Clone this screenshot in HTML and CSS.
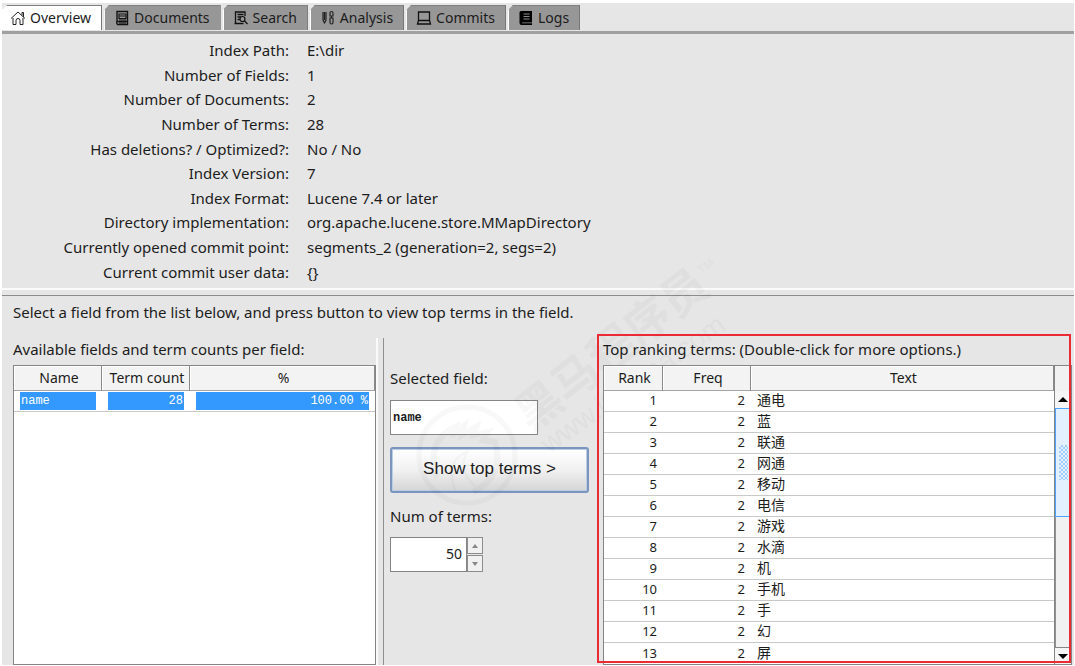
FILE: index.html
```html
<!DOCTYPE html>
<html lang="en">
<head>
<meta charset="utf-8">
<title>Luke: Lucene Toolbox</title>
<link rel="stylesheet" href="styles.css">
</head>
<body>
<div class="app">
  <nav class="tabs" role="tablist">
    <button class="tab tab-active" role="tab" aria-selected="true">
      <svg class="icon" viewBox="0 0 16 16" aria-hidden="true"><path d="M1 8.500 8 2l7 6.500M12 5.500V2.500h1.500V7M3 8v6.500h3V10.500q0-2 2-2t2 2v4h3V8" fill="none" stroke="#222"/></svg>
      Overview</button>
    <button class="tab" role="tab">
      <svg class="icon" viewBox="0 0 16 16" aria-hidden="true"><path d="M3 1.500h10.500v10H3zM3 11.500q-1 1.500.5 3h10v-3" fill="none" stroke="#111" stroke-width="1.400"/><path d="M5 4h7v4.500H5zM5 10h7M5 13h7" fill="none" stroke="#111" stroke-width="1.200"/><path d="M5.500 6h6" stroke="#111"/></svg>
      Documents</button>
    <button class="tab" role="tab">
      <svg class="icon" viewBox="0 0 16 16" aria-hidden="true"><path d="M12 6V2H2.500v11M4.500 4.500h6M4.500 7h3.500M4.500 9.500h2.500" fill="none" stroke="#111" stroke-width="1.300"/><circle cx="9.500" cy="9" r="2.500" fill="none" stroke="#111" stroke-width="1.200"/><path d="m11.500 11 3 3M1.500 13.500h9" stroke="#111" stroke-width="1.300"/></svg>
      Search</button>
    <button class="tab" role="tab">
      <svg class="icon" viewBox="0 0 16 16" aria-hidden="true"><path d="M3 2v8l1.500 3L6 10V2M4.500 2v8M10 5.500V3q0-1.500 1.500-1.500T13 3v2.500M9.500 6h4M10 8v4.500q0 1.500 1.500 1.500t1.500-1.500V8zM11.500 8V6" fill="none" stroke="#222" stroke-width="1.200"/></svg>
      Analysis</button>
    <button class="tab" role="tab">
      <svg class="icon" viewBox="0 0 16 16" aria-hidden="true"><path d="M2.500 2h11v8.500h-11zM2.500 10.500l-1 3.500h13l-1-3.500M1.500 14h13" fill="none" stroke="#111" stroke-width="1.300"/></svg>
      Commits</button>
    <button class="tab" role="tab">
      <svg class="icon" viewBox="0 0 16 16" aria-hidden="true"><path d="M3 1h11v11.500H4v.8h10V15H3.500Q1.500 15 1.500 13V2.500Q1.500 1 3 1z" fill="#000"/><path d="M5.500 4h6M5.500 6.500h6M5.500 9h6" stroke="#8a8a8a"/></svg>
      Logs</button>
  </nav>

  <dl class="info">
    <dt>Index Path:</dt><dd>E:\dir</dd>
    <dt>Number of Fields:</dt><dd>1</dd>
    <dt>Number of Documents:</dt><dd>2</dd>
    <dt>Number of Terms:</dt><dd>28</dd>
    <dt>Has deletions? / Optimized?:</dt><dd>No / No</dd>
    <dt>Index Version:</dt><dd>7</dd>
    <dt>Index Format:</dt><dd>Lucene 7.4 or later</dd>
    <dt>Directory implementation:</dt><dd>org.apache.lucene.store.MMapDirectory</dd>
    <dt>Currently opened commit point:</dt><dd>segments_2 (generation=2, segs=2)</dd>
    <dt>Current commit user data:</dt><dd>{}</dd>
  </dl>

  <div class="split-h"></div>

  <main class="lower">
    <p class="hint">Select a field from the list below, and press button to view top terms in the field.</p>
    <div class="panes">
      <section class="fields">
        <h2 class="caption" id="fields-caption">Available fields and term counts per field:</h2>
        <div class="box">
          <table class="grid grid-fields" aria-labelledby="fields-caption">
            <colgroup><col class="col-name"><col class="col-count"><col></colgroup>
            <thead><tr><th>Name</th><th>Term count</th><th>%</th></tr></thead>
            <tbody><tr><td><span class="sel">name</span></td><td><span class="sel sel-num">28</span></td><td><span class="sel sel-num">100.00 %</span></td></tr></tbody>
          </table>
        </div>
      </section>

      <div class="split-v"></div>

      <section class="controls">
        <label for="field">Selected field:</label>
        <input class="text" id="field" type="text" value="name">
        <button class="show">Show top terms &gt;</button>
        <label for="num">Num of terms:</label>
        <div class="spinner">
          <input id="num" type="text" inputmode="numeric" value="50">
          <div class="steps">
            <button aria-label="Increase"><svg viewBox="0 0 6 4"><path d="M0 4 3 0l3 4z"/></svg></button>
            <button aria-label="Decrease"><svg viewBox="0 0 6 4"><path d="M0 0h6L3 4z"/></svg></button>
          </div>
        </div>
      </section>

      <section class="terms">
        <h2 class="caption" id="terms-caption">Top ranking terms: (Double-click for more options.)</h2>
        <div class="box box-terms">
          <table class="grid grid-terms" aria-labelledby="terms-caption">
            <colgroup><col class="col-rank"><col class="col-freq"><col></colgroup>
            <thead><tr><th>Rank</th><th>Freq</th><th>Text</th></tr></thead>
            <tbody lang="zh">
              <tr><td>1</td><td>2</td><td>通电</td></tr>
              <tr><td>2</td><td>2</td><td>蓝</td></tr>
              <tr><td>3</td><td>2</td><td>联通</td></tr>
              <tr><td>4</td><td>2</td><td>网通</td></tr>
              <tr><td>5</td><td>2</td><td>移动</td></tr>
              <tr><td>6</td><td>2</td><td>电信</td></tr>
              <tr><td>7</td><td>2</td><td>游戏</td></tr>
              <tr><td>8</td><td>2</td><td>水滴</td></tr>
              <tr><td>9</td><td>2</td><td>机</td></tr>
              <tr><td>10</td><td>2</td><td>手机</td></tr>
              <tr><td>11</td><td>2</td><td>手</td></tr>
              <tr><td>12</td><td>2</td><td>幻</td></tr>
              <tr><td>13</td><td>2</td><td>屏</td></tr>
            </tbody>
          </table>
          <div class="scroll">
            <div class="scroll-corner"></div>
            <button class="arrow" aria-label="Scroll up"><svg viewBox="0 0 10 5"><path d="M0 5 5 0l5 5z"/></svg></button>
            <div class="thumb"><div class="grip"></div></div>
            <div class="track"></div>
            <button class="arrow arrow-down" aria-label="Scroll down"><svg viewBox="0 0 10 5"><path d="M0 0h10L5 5z"/></svg></button>
          </div>
        </div>
        <div class="frame"></div>
      </section>
    </div>
  </main>

  <svg class="watermark" viewBox="0 0 340 270" aria-hidden="true">
    <g fill="none" stroke="#000">
      <circle cx="67" cy="210" r="48" stroke-width="5"/>
      <path d="M37 232q-12-36 18-50l-4 9 13-10-2 9 14-8-3 8 15-3-5 8 12 2q10 34-22 50" stroke-width="6"/>
      <path d="M55 245q-10-30 12-38-10 18 8 34" stroke-width="2"/>
    </g>
    <g transform="translate(131 188) rotate(-38)">
      <text class="wm-name" x="0" y="0">黑马程序员</text>
      <text class="wm-tm" x="232" y="-20">TM</text>
    </g>
    <text class="wm-url" transform="translate(149 209) rotate(-35)">www.itheima.com</text>
  </svg>
</div>
</body>
</html>
```
FILE: styles.css
```css
* { box-sizing: border-box; }

body {
  margin: 0;
  background: #fff;
  color: #1c1c1c;
  font: 15px/18px "Noto Sans", "Noto Sans CJK SC", sans-serif;
}

button, input { font: inherit; color: inherit; }

.app {
  position: relative;
  display: flex;
  flex-direction: column;
  min-height: 100vh;
  padding: 3px 1px 1px 2px;
}

/* Tabs */
.tabs {
  display: flex;
  gap: 2px;
  padding-top: 2px;
  background: #e6e6e6;
  border-bottom: 3px solid #a0a0a0;
  height: 31px;
}

.tab {
  display: flex;
  align-items: center;
  gap: 4px;
  height: 25px;
  padding: 0 10px 0 9px;
  border: 0;
  border-top: 1px solid #808080;
  border-right: 1px solid #777;
  border-left: 1px solid #fff;
  background: #979797;
  font-size: 14px;
  white-space: nowrap;
  clip-path: polygon(5px 0, 100% 0, 100% 100%, 0 100%, 0 5px);
}

.tab-active { background: #fff; padding-left: 7px; }

.icon { width: 16px; height: 16px; flex: none; }

/* Index information */
.info {
  display: grid;
  grid-template-columns: 287px 1fr;
  grid-auto-rows: 1fr;
  column-gap: 18px;
  align-items: center;
  min-height: 254px;
  margin: 0;
  padding: 4px 0;
  background: #e6e6e6;
}

.info dt { text-align: right; }
.info dd { margin: 0; }

.split-h {
  height: 8px;
  background: #e6e6e6;
  border-top: 2px solid #fafafa;
  border-bottom: 1px solid #8c8c8c;
}

/* Lower pane */
.lower {
  display: flex;
  flex-direction: column;
  flex: 1;
  background: #e6e6e6;
}

.hint { margin: 7px 11px 17px; }

.panes { display: flex; flex: 1; }

.caption {
  margin: 0;
  padding: 2px 0 7px;
  font-size: 15px;
  font-weight: 400;
}

.fields {
  display: flex;
  flex-direction: column;
  width: 374px;
  padding-left: 11px;
}

.box {
  flex: 1;
  background: #fff;
  border: 1px solid #858585;
}

.grid {
  width: 100%;
  table-layout: fixed;
  border-collapse: separate;
  border-spacing: 0;
}

.grid th {
  height: 25px;
  padding: 0 0 0 3px;
  background: #f3f3f3;
  border-right: 1px solid #8a8a8a;
  border-bottom: 1px solid #a5a5a5;
  box-shadow: inset 1px 1px #fff;
  font-size: 14px;
  font-weight: 400;
}

.grid td { height: 21px; border-bottom: 1px solid #c9c9c9; }

.col-name { width: 88px; }
.col-count { width: 88px; }

.grid-fields td { padding: 0 6px; }

.sel {
  display: block;
  padding: 0 1px;
  background: #3399ff;
  color: #fff;
  font: 12px/18px "Liberation Mono", monospace;
}

.sel-num { text-align: right; }

.split-v {
  width: 8px;
  border-left: 2px solid #fafafa;
  border-right: 1px solid #909090;
}

/* Controls */
.controls {
  display: flex;
  flex-direction: column;
  align-items: flex-start;
  width: 219px;
  padding: 31px 12px 0 6px;
}

.text {
  width: 148px;
  height: 35px;
  margin: 13px 0 12px;
  padding: 0 2px;
  border: 1px solid #858585;
  background: #fff;
  font: bold 12px/18px "Liberation Mono", monospace;
}

.show {
  width: 199px;
  height: 46px;
  margin-bottom: 14px;
  padding: 0 6px 2px;
  border: 2px solid #7b95bd;
  border-radius: 3px;
  background: linear-gradient(#fff, #f1f1f1 50%, #d5d5d5);
  box-shadow: inset 0 0 0 1px #b9cce8;
  font: 17px/20px "Liberation Sans", Arial, sans-serif;
}

.spinner { display: flex; margin-top: 12px; }

.spinner input {
  width: 77px;
  height: 35px;
  padding: 0 4px 2px;
  border: 1px solid #858585;
  background: #fff;
  font-size: 14px;
  text-align: right;
}

.steps { display: flex; flex-direction: column; gap: 1px; }

.steps button {
  display: flex;
  align-items: center;
  justify-content: center;
  width: 16px;
  height: 17px;
  padding: 0;
  border: 1px solid #8c8c8c;
  background: #f1f1f1;
}

.steps svg { width: 6px; height: 4px; fill: #888; }

/* Ranking */
.terms {
  position: relative;
  display: flex;
  flex: 1;
  flex-direction: column;
  padding-right: 2px;
}

.box-terms {
  position: relative;
  z-index: 2;
  display: flex;
}

.grid-terms { flex: 1; width: auto; align-self: flex-start; }
.grid-terms td { padding: 0 6px 2px 0; font-size: 13px; line-height: 18px; text-align: right; }
.grid-terms td:nth-child(3) { padding-left: 6px; font-size: 14px; text-align: left; }
.grid-terms tr:last-child td { border-bottom: 0; }

.col-rank { width: 59px; }
.col-freq { width: 88px; }

.scroll {
  display: flex;
  flex-direction: column;
  width: 17px;
  border-left: 1px solid #858585;
  background: #f1f1f1;
}

.scroll-corner { height: 25px; }

.arrow {
  display: flex;
  align-items: center;
  justify-content: center;
  height: 17px;
  padding: 0;
  border: 0;
  background: #f5f5f5;
}

.arrow svg { width: 10px; height: 5px; }
.arrow-down { border-top: 1px solid #858585; }

.thumb {
  display: flex;
  align-items: center;
  justify-content: center;
  height: 109px;
  border: 1px solid #4da3ff;
  background: #e2f0ff;
}

.grip {
  width: 9px;
  height: 35px;
  background: repeating-conic-gradient(#9fcdff 0 25%, #e2f0ff 0 50%) 0 0 / 4px 4px;
}

.track { flex: 1; border-left: 1px solid #909090; }

.frame {
  position: absolute;
  z-index: 3;
  inset: -4px 3px 2px -6px;
  border: 2px solid #ec2a35;
  pointer-events: none;
}

.watermark {
  position: absolute;
  z-index: 1;
  top: 245px;
  left: 400px;
  width: 340px;
  height: 270px;
  opacity: 0.025;
  pointer-events: none;
}

.wm-name { font: bold 46px "Noto Sans CJK SC", sans-serif; }
.wm-tm { font: 12px "Liberation Sans", sans-serif; }
.wm-url { font: 28px "Liberation Sans", sans-serif; }
```
